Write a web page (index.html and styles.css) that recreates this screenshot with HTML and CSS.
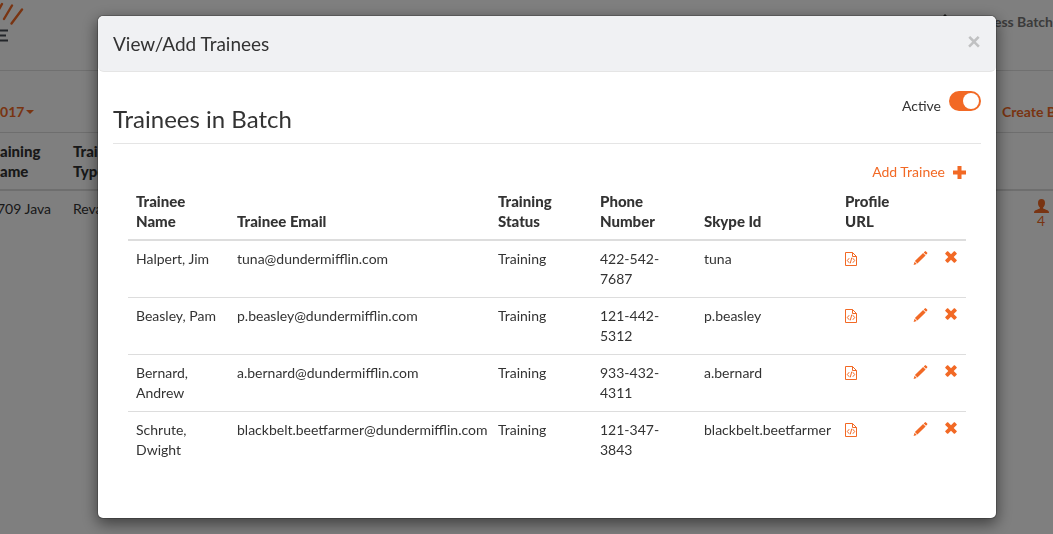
FILE: index.html
```
<!DOCTYPE html>
<html lang="en">
<head>
<meta charset="utf-8">
<title>View/Add Trainees</title>
<link rel="stylesheet" href="styles.css">
</head>
<body>
<svg class="sprite" aria-hidden="true">
  <symbol id="file-code" viewBox="0 0 12 14">
    <path d="M.5.5h7l4 4v9H.5zM7.5.5v4h4" fill="none" stroke="currentColor"/>
    <path d="M4.200 6.200 2.300 8.500l1.900 2.300M7.800 6.200l1.900 2.300-1.900 2.300M6.800 5.600 5.200 11.400" fill="none" stroke="currentColor"/>
  </symbol>
  <symbol id="pencil" viewBox="0 0 14 14">
    <path d="M11.300.4q.6-.6 1.200 0l1.100 1.100q.6.6 0 1.200l-1.100 1.100-2.300-2.300zM9.600 1.900l2.500 2.500-8.200 8.200-2.500-2.500zM1.100 10.700l2.200 2.200L.1 13.900z" fill="currentColor"/>
  </symbol>
  <symbol id="remove" viewBox="0 0 12 12">
    <path d="M3 .3 6 3.300 9 .3q.4-.3.8 0L11.700 2.200q.3.4 0 .8L8.700 6l3 3q.3.4 0 .8L9.800 11.700q-.4.3-.8 0L6 8.700 3 11.700q-.4.3-.8 0L.3 9.800Q0 9.400.3 9L3.300 6 .3 3Q0 2.600.3 2.200L2.200.3Q2.600 0 3 .3z" fill="currentColor"/>
  </symbol>
</svg>

<div class="page">
  <header class="navbar">
    <svg class="logo" width="24" height="46" viewBox="0 0 24 46" aria-hidden="true">
      <path d="M-2 11 2 4M4 19 12 5.500M11.500 23.500 22 9.500" fill="none" stroke="#f26925" stroke-width="2.400" stroke-linecap="round"/>
      <path d="M0 30.500H8M0 35.500H6M0 40.500H8" fill="none" stroke="#474c55" stroke-width="2"/>
    </svg>
    <nav class="nav">
      <svg width="14" height="14" viewBox="0 0 14 14" aria-hidden="true"><path d="M7 0l7 7h-2v6H8.500V9h-3v4H2V7H0z" fill="#333"/></svg>
      <a class="nav-link" href="#">Assess Batch</a>
    </nav>
  </header>
  <div class="toolbar">
    <button class="year" type="button">2017<span class="caret"></span></button>
    <a class="create" href="#">Create B</a>
  </div>
  <table class="batches">
    <thead><tr><th class="first">aining<br>ame</th><th>Training<br>Type</th><th></th></tr></thead>
    <tbody><tr><td class="first">709 Java</td><td>Revature</td>
      <td class="count">
        <svg width="15" height="14" viewBox="0 0 15 14" aria-hidden="true"><path d="M7.500 0C9.800 0 11 1.600 11 4c0 2-.9 3.500-1.900 4.500v1c1.600.9 4.500 1.400 5.400 2.400.4.5.5 1.300.5 2.100H0c0-.8.100-1.600.5-2.100.9-1 3.800-1.500 5.400-2.400v-1C4.900 7.500 4 6 4 4c0-2.400 1.200-4 3.500-4z" fill="currentColor"/></svg>
        <span>4</span>
      </td></tr></tbody>
  </table>
</div>

<div class="backdrop">
  <section class="modal" role="dialog" aria-labelledby="modal-title">
    <header class="modal-header">
      <h4 class="modal-title" id="modal-title">View/Add Trainees</h4>
      <button class="close" type="button" aria-label="Close">×</button>
    </header>
    <div class="modal-body">
      <div class="heading">
        <h3>Trainees in Batch</h3>
        <label class="switch"><span>Active</span><input type="checkbox" role="switch" checked></label>
      </div>
      <div class="panel">
        <div class="actions">
          <button class="add" type="button">Add Trainee
            <svg width="13" height="13" viewBox="0 0 13 13" aria-hidden="true"><path d="M4.500 0h4v4.500H13v4H8.500V13h-4V8.500H0v-4h4.500z" fill="currentColor"/></svg>
          </button>
        </div>
        <table class="trainees">
          <colgroup><col class="name"><col class="email"><col class="status"><col class="phone"><col class="skype"><col class="profile"><col class="edit"><col class="delete"></colgroup>
          <thead>
            <tr><th>Trainee Name</th><th>Trainee Email</th><th>Training Status</th><th>Phone Number</th><th>Skype Id</th><th>Profile URL</th><th></th><th></th></tr>
          </thead>
          <tbody>
            <tr><td>Halpert, Jim</td><td>tuna@dundermifflin.com</td><td>Training</td><td>422-542-7687</td><td>tuna</td>
              <td><a class="icon file" href="#" aria-label="Profile"><svg width="12" height="14"><use href="#file-code"/></svg></a></td>
              <td><button class="icon" type="button" aria-label="Edit"><svg width="15" height="14"><use href="#pencil"/></svg></button></td>
              <td><button class="icon" type="button" aria-label="Delete"><svg width="12" height="12"><use href="#remove"/></svg></button></td></tr>
            <tr><td>Beasley, Pam</td><td>p.beasley@dundermifflin.com</td><td>Training</td><td>121-442-5312</td><td>p.beasley</td>
              <td><a class="icon file" href="#" aria-label="Profile"><svg width="12" height="14"><use href="#file-code"/></svg></a></td>
              <td><button class="icon" type="button" aria-label="Edit"><svg width="15" height="14"><use href="#pencil"/></svg></button></td>
              <td><button class="icon" type="button" aria-label="Delete"><svg width="12" height="12"><use href="#remove"/></svg></button></td></tr>
            <tr><td>Bernard, Andrew</td><td>a.bernard@dundermifflin.com</td><td>Training</td><td>933-432-4311</td><td>a.bernard</td>
              <td><a class="icon file" href="#" aria-label="Profile"><svg width="12" height="14"><use href="#file-code"/></svg></a></td>
              <td><button class="icon" type="button" aria-label="Edit"><svg width="15" height="14"><use href="#pencil"/></svg></button></td>
              <td><button class="icon" type="button" aria-label="Delete"><svg width="12" height="12"><use href="#remove"/></svg></button></td></tr>
            <tr><td>Schrute, Dwight</td><td>blackbelt.beetfarmer@dundermifflin.com</td><td>Training</td><td>121-347-3843</td><td>blackbelt.beetfarmer</td>
              <td><a class="icon file" href="#" aria-label="Profile"><svg width="12" height="14"><use href="#file-code"/></svg></a></td>
              <td><button class="icon" type="button" aria-label="Edit"><svg width="15" height="14"><use href="#pencil"/></svg></button></td>
              <td><button class="icon" type="button" aria-label="Delete"><svg width="12" height="12"><use href="#remove"/></svg></button></td></tr>
          </tbody>
        </table>
      </div>
    </div>
  </section>
</div>
</body>
</html>
```
FILE: styles.css
```
* { box-sizing: border-box; }
body {
  margin: 0;
  font: 14px/20px Lato, "Liberation Sans", sans-serif;
  color: #333;
  background: #fff;
  overflow: hidden;
}
button { font: inherit; color: inherit; background: none; border: 0; padding: 0; cursor: pointer; }
a { color: inherit; text-decoration: none; }
table { width: 100%; border-collapse: collapse; table-layout: fixed; }
th, td { padding: 8px; text-align: left; vertical-align: top; }
th { font-size: 15px; font-weight: 900; vertical-align: bottom; }
h3, h4 { margin: 0; font-weight: 400; }
.sprite { display: none; }

/* page behind the dialog */
.page { overflow: hidden; }
.navbar {
  display: flex;
  justify-content: space-between;
  height: 71px;
  border-bottom: 1px solid #e0e0e0;
}
.logo { display: block; }
.nav { display: flex; align-items: flex-start; gap: 20px; padding-top: 12px; }
.nav svg { margin-top: 2px; }
.nav-link { font-weight: 700; color: #777; }
.toolbar {
  display: flex;
  justify-content: space-between;
  padding-top: 31px;
  height: 61px;
  margin: 0 -3px 0 -8px;
  color: #f26925;
  font-weight: 700;
}
.year { display: flex; align-items: center; gap: 2px; height: 20px; }
.caret { border: 4px solid transparent; border-top-color: currentColor; border-bottom: 0; }
.batches { border-top: 1px solid #ddd; }
.batches th { border-bottom: 2px solid #ddd; }
.batches .first { width: 65px; padding-left: 0; white-space: nowrap; }
.batches td.first { text-indent: -3px; }
.batches .count { color: #f26925; text-align: right; line-height: 16px; padding: 8px 4px; }
.count svg { display: block; margin-left: auto; }
.count span { display: block; padding-right: 4px; }

/* dialog */
.backdrop {
  position: fixed;
  inset: 0;
  display: flex;
  justify-content: center;
  align-items: flex-start;
  padding: 15px 16px 15px 57px;
  background: rgba(0, 0, 0, .5);
}
.modal {
  width: 100%;
  max-width: 900px;
  background: #fff;
  background-clip: padding-box;
  border: 1px solid rgba(0, 0, 0, .2);
  border-radius: 6px;
  box-shadow: 0 5px 15px rgba(0, 0, 0, .5);
}
.modal-header {
  display: flex;
  justify-content: space-between;
  align-items: center;
  padding: 15px;
  background: #f0f1f3;
  border-bottom: 1px solid #e5e5e5;
  border-radius: 6px;
}
.modal-title { font-size: 19px; line-height: 25px; }
.close { font-size: 24px; line-height: 20px; font-weight: 900; color: #c0c1c2; padding-bottom: 5px; }
.modal-body { padding: 15px 15px 50px; }
.heading {
  display: flex;
  justify-content: space-between;
  align-items: flex-start;
  border-bottom: 1px solid #e5e5e5;
}
.heading h3 { padding: 19px 0 11px; font-size: 24px; line-height: 26px; }
.switch { display: flex; align-items: flex-start; gap: 8px; padding-top: 4px; }
.switch span { padding-top: 5px; }
.switch input {
  appearance: none;
  margin: 0;
  width: 32px;
  height: 20px;
  padding: 2px;
  border-radius: 10px;
  background: #f26925;
}
.switch input::before {
  content: "";
  display: block;
  width: 16px;
  height: 16px;
  border-radius: 50%;
  background: #fff;
}
.switch input:checked::before { margin-left: auto; }
.panel { padding: 18px 15px 0; }
.actions { display: flex; justify-content: flex-end; padding-bottom: 1px; }
.add { display: flex; align-items: center; gap: 8px; color: #f26925; }
.trainees thead th { border-bottom: 2px solid #ddd; }
.trainees tbody tr + tr td { border-top: 1px solid #ddd; }
.name { width: 101px; }
.email { width: 261px; }
.status { width: 102px; }
.phone { width: 104px; }
.skype { width: 141px; }
.profile { width: 68px; }
.edit { width: 32px; }
.delete { width: 29px; }
.icon { display: block; color: #f26925; padding-top: 2px; }
.icon svg { display: block; }
.file { padding-top: 3px; }
```
